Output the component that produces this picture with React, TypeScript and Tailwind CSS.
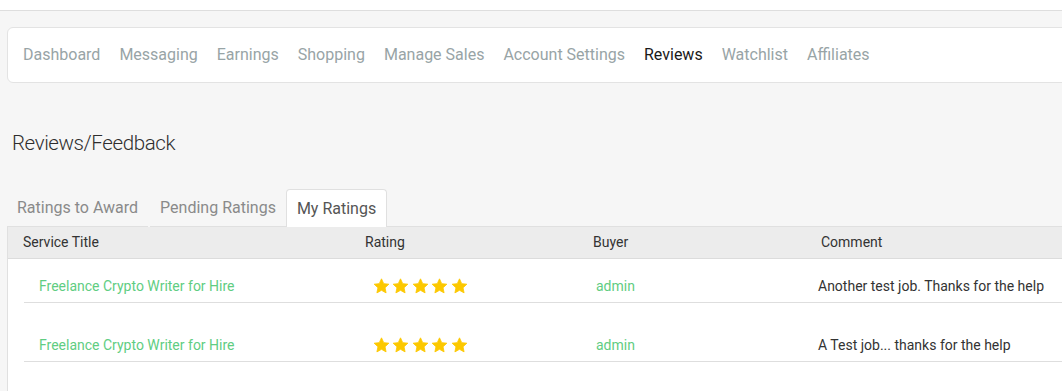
import React from "react";

const navItems = [
  "Dashboard",
  "Messaging",
  "Earnings",
  "Shopping",
  "Manage Sales",
  "Account Settings",
  "Reviews",
  "Watchlist",
  "Affiliates",
];

function Star() {
  return (
    <svg width="17" height="16" viewBox="0 0 24 23" className="block">
      <path
        d="M12 1.2l3.2 6.9 7.4.8-5.5 5.1 1.5 7.4L12 17.7l-6.6 3.7 1.5-7.4L1.4 8.9l7.4-.8z"
        fill="#fcc800"
        stroke="#fcc800"
        strokeWidth="1.2"
        strokeLinejoin="round"
      />
    </svg>
  );
}

function Stars() {
  return (
    <div className="flex gap-[2.4px]">
      <Star />
      <Star />
      <Star />
      <Star />
      <Star />
    </div>
  );
}

const rows = [
  { title: "Freelance Crypto Writer for Hire", buyer: "admin", comment: "Another test job. Thanks for the help", pt: "pt-[11px]" },
  { title: "Freelance Crypto Writer for Hire", buyer: "admin", comment: "A Test job... thanks for the help", pt: "pt-[26px]" },
];

export default function App() {
  return (
    <div
      className="w-[1062px] h-[391px] overflow-hidden bg-[#f6f6f6]"
      style={{ fontFamily: "Roboto, 'Noto Sans', sans-serif" }}
    >
      <div className="h-[11px] bg-white border-b border-[#dedede]" />
      <div className="pl-[7px] pt-[16px]">
        <div className="w-[1100px] h-[56px] bg-white border border-[#e3e3e3] rounded-[6px] flex items-center pl-[15px] gap-[19px] text-[16px] text-[#98a4a6]">
          {navItems.map((n) => (
            <span key={n} className={n === "Reviews" ? "text-[#1a1a1a]" : ""}>
              {n}
            </span>
          ))}
        </div>
      </div>
      <div className="pl-[12px] pt-[47px] h-[106px]">
        <h1 className="text-[20.5px] leading-[26px] font-light text-[#2e2e2e] tracking-[-0.4px]">Reviews/Feedback</h1>
      </div>
      <div className="pl-[7px]">
        <div className="flex items-end h-[38px] text-[16px]">
          <div className="px-[10px] h-[38px] flex items-center text-[#8a8a8a] border-b border-[#e0e0e0]">Ratings to Award</div>
          <div className="ml-[2px] px-[10px] h-[38px] flex items-center text-[#8a8a8a] border-b border-[#e0e0e0]">Pending Ratings</div>
          <div className="px-[10px] h-[38px] flex items-center text-[#555] bg-white border border-b-0 border-[#e0e0e0] rounded-t-[4px]">My Ratings</div>
          <div className="flex-1 border-b border-[#e0e0e0]" />
        </div>
        <div className="bg-white border-l border-[#e0e0e0] h-[200px]">
          <div className="grid grid-cols-[342px_228px_228px_1fr] h-[32px] items-center bg-[#ececec] border-b border-[#dcdcdc] text-[14px] text-[#333]">
            <div className="pl-[15px]">Service Title</div>
            <div className="pl-[15px]">Rating</div>
            <div className="pl-[15px]">Buyer</div>
            <div className="pl-[15px]">Comment</div>
          </div>
          <div className="pl-[16px]">
            {rows.map((r, i) => (
              <div key={i} className={r.pt}>
                <div className="grid grid-cols-[334px_223px_222px_1fr] h-[33px] items-center border-b border-[#dedede] text-[14px]">
                  <div className="pl-[15px] text-[#5fcd82]">{r.title}</div>
                  <div className="pl-[15px]"><Stars /></div>
                  <div className="pl-[15px] text-[#5fcd82]">{r.buyer}</div>
                  <div className="pl-[15px] text-[#333]">{r.comment}</div>
                </div>
              </div>
            ))}
          </div>
        </div>
      </div>
    </div>
  );
}
